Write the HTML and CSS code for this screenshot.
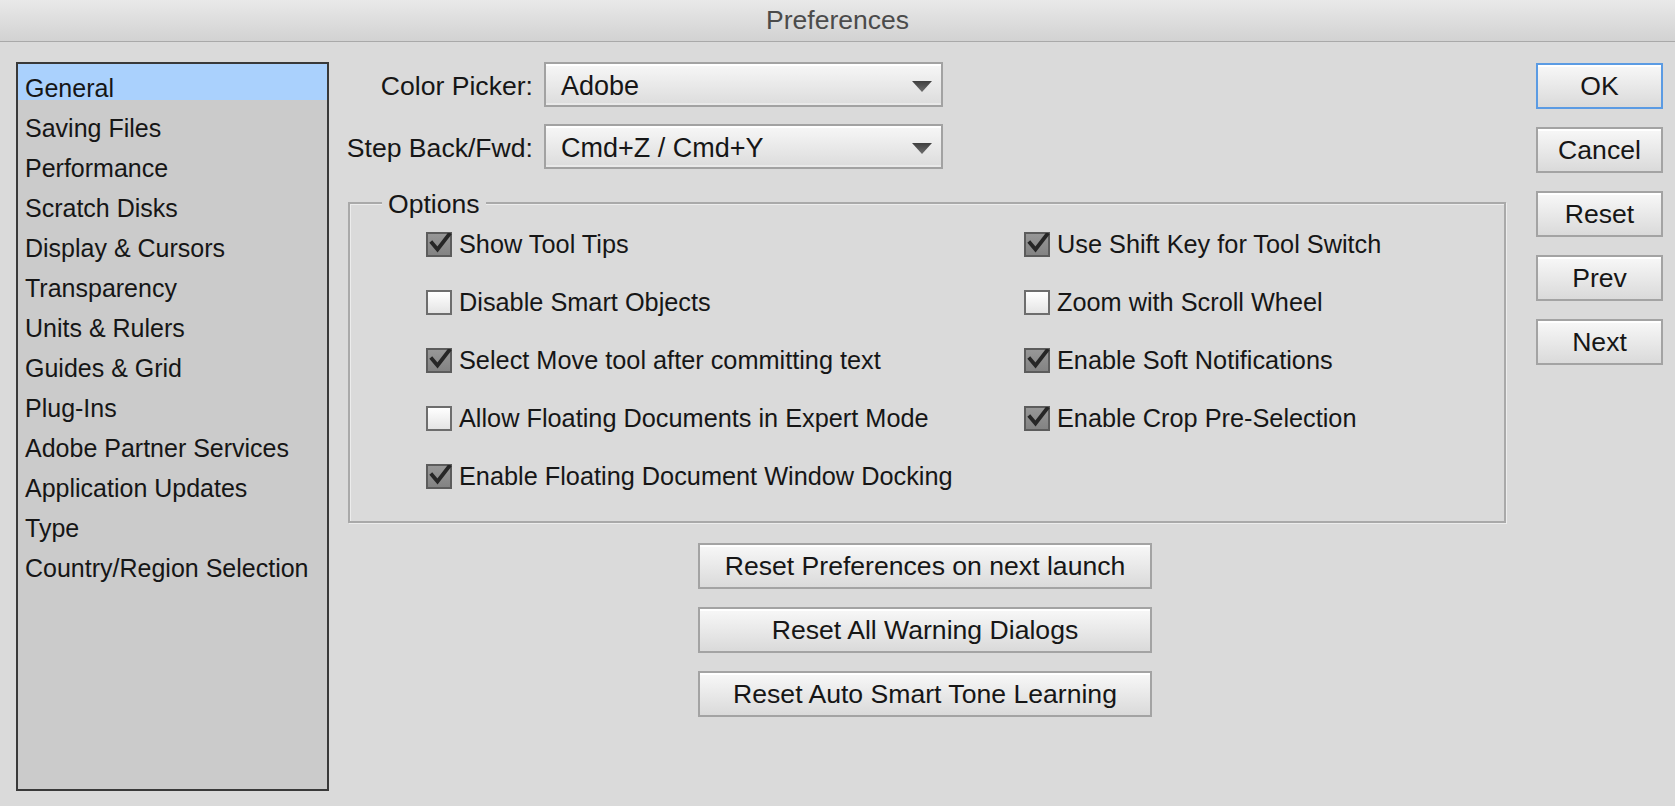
FILE: index.html
```html
<!DOCTYPE html>
<html lang="en">
<head>
<meta charset="utf-8">
<title>Preferences</title>
<link rel="stylesheet" href="styles.css">
</head>
<body>
<div class="window">
  <div class="titlebar">Preferences</div>
  <div class="content">
    <div class="sidebar">
      <ul class="nav">
        <li class="selected">General</li>
        <li>Saving Files</li>
        <li>Performance</li>
        <li>Scratch Disks</li>
        <li>Display &amp; Cursors</li>
        <li>Transparency</li>
        <li>Units &amp; Rulers</li>
        <li>Guides &amp; Grid</li>
        <li>Plug-Ins</li>
        <li>Adobe Partner Services</li>
        <li>Application Updates</li>
        <li>Type</li>
        <li>Country/Region Selection</li>
      </ul>
    </div>
    <div class="main">
      <div class="fields">
        <label class="field-label">Color Picker:</label>
        <div class="select"><span>Adobe</span><svg class="arrow" width="20" height="11" viewBox="0 0 20 11"><defs><linearGradient id="ag" x1="0" y1="0" x2="0" y2="1"><stop offset="0" stop-color="#3f3f3f"/><stop offset="1" stop-color="#6e6e6e"/></linearGradient></defs><polygon points="0,0 20,0 10,11" fill="url(#ag)"/></svg></div>
        <label class="field-label">Step Back/Fwd:</label>
        <div class="select"><span>Cmd+Z / Cmd+Y</span><svg class="arrow" width="20" height="11" viewBox="0 0 20 11"><polygon points="0,0 20,0 10,11" fill="url(#ag)"/></svg></div>
      </div>
      <div class="group">
        <div class="legend">Options</div>
        <div class="checks">
          <div class="check"><span class="box on"><svg viewBox="0 0 24 24" width="25" height="24"><polyline points="4.5,10 10,16.5 21.5,1.5" fill="none" stroke="#262626" stroke-width="3.8" stroke-linecap="square"/></svg></span><span class="text">Show Tool Tips</span></div>
          <div class="check"><span class="box on"><svg viewBox="0 0 24 24" width="25" height="24"><polyline points="4.5,10 10,16.5 21.5,1.5" fill="none" stroke="#262626" stroke-width="3.8" stroke-linecap="square"/></svg></span><span class="text">Use Shift Key for Tool Switch</span></div>
          <div class="check"><span class="box"></span><span class="text">Disable Smart Objects</span></div>
          <div class="check"><span class="box"></span><span class="text">Zoom with Scroll Wheel</span></div>
          <div class="check"><span class="box on"><svg viewBox="0 0 24 24" width="25" height="24"><polyline points="4.5,10 10,16.5 21.5,1.5" fill="none" stroke="#262626" stroke-width="3.8" stroke-linecap="square"/></svg></span><span class="text">Select Move tool after committing text</span></div>
          <div class="check"><span class="box on"><svg viewBox="0 0 24 24" width="25" height="24"><polyline points="4.5,10 10,16.5 21.5,1.5" fill="none" stroke="#262626" stroke-width="3.8" stroke-linecap="square"/></svg></span><span class="text">Enable Soft Notifications</span></div>
          <div class="check"><span class="box"></span><span class="text">Allow Floating Documents in Expert Mode</span></div>
          <div class="check"><span class="box on"><svg viewBox="0 0 24 24" width="25" height="24"><polyline points="4.5,10 10,16.5 21.5,1.5" fill="none" stroke="#262626" stroke-width="3.8" stroke-linecap="square"/></svg></span><span class="text">Enable Crop Pre-Selection</span></div>
          <div class="check"><span class="box on"><svg viewBox="0 0 24 24" width="25" height="24"><polyline points="4.5,10 10,16.5 21.5,1.5" fill="none" stroke="#262626" stroke-width="3.8" stroke-linecap="square"/></svg></span><span class="text">Enable Floating Document Window Docking</span></div>
        </div>
      </div>
      <div class="resets">
        <button class="btn wide">Reset Preferences on next launch</button>
        <button class="btn wide">Reset All Warning Dialogs</button>
        <button class="btn wide">Reset Auto Smart Tone Learning</button>
      </div>
    </div>
    <div class="actions">
      <button class="btn side default">OK</button>
      <button class="btn side">Cancel</button>
      <button class="btn side">Reset</button>
      <button class="btn side">Prev</button>
      <button class="btn side">Next</button>
    </div>
  </div>
</div>
</body>
</html>
```

FILE: styles.css
```css
* { box-sizing: border-box; }
html, body {
  margin: 0;
  padding: 0;
  width: 1675px;
  height: 806px;
  overflow: hidden;
  background: #dadada;
  font-family: "Liberation Sans", Arial, sans-serif;
  color: #161616;
}
.window {
  width: 1675px;
  height: 806px;
  display: flex;
  flex-direction: column;
}
.titlebar {
  height: 42px;
  line-height: 40px;
  text-align: center;
  font-size: 26.5px;
  color: #4b4b4b;
  background: linear-gradient(#e9e9e9, #d2d2d2);
  border-bottom: 1px solid #a9a9a9;
}
.content {
  display: flex;
  align-items: flex-start;
  padding: 20px 0 0 16px;
}
.sidebar {
  width: 313px;
  height: 729px;
  border: 2px solid #393939;
  background: #cbcbcb;
  overflow: hidden;
}
.nav {
  list-style: none;
  margin: -4px 0 0 0;
  padding: 0;
}
.nav li {
  height: 40px;
  padding: 13px 0 0 7px;
  font-size: 25px;
  line-height: 30px;
  white-space: nowrap;
}
.nav li.selected { background: #aad1fd; }
.main {
  margin-left: 19px;
  width: 1158px;
  display: flex;
  flex-direction: column;
}
.fields {
  display: grid;
  grid-template-columns: 185px 399px;
  column-gap: 11px;
  row-gap: 17px;
  align-items: center;
}
.field-label {
  justify-self: end;
  font-size: 26.6px;
  padding-top: 4px;
  white-space: nowrap;
}
.select {
  height: 45px;
  border: 2px solid #a2a2a2;
  background: linear-gradient(#f7f7f7, #dcdcdc);
  box-shadow: inset 0 2px 0 #ffffff, inset 0 -2px 0 #e9e9e9;
  display: flex;
  align-items: center;
  justify-content: space-between;
  padding: 3px 9px 0 15px;
  font-size: 27px;
}
.select .arrow { display: block; }
.group {
  margin-top: 33px;
  border: 2px solid #a9a9a9;
  box-shadow: inset 1px 1px 0 #ececec, 1px 1px 0 #ececec;
  padding: 0 0 32px 0;
}
.legend {
  margin: -15px 0 0 32px;
  width: fit-content;
  padding: 0 6px;
  background: #dadada;
  font-size: 26.6px;
  line-height: 30px;
}
.checks {
  margin: 13px 0 0 76px;
  display: grid;
  grid-template-columns: 598px 1fr;
  row-gap: 33px;
}
.check {
  display: flex;
  align-items: center;
  height: 25px;
}
.box {
  width: 26px;
  height: 25px;
  flex: none;
  border: 2px solid #6d6d6d;
  background: linear-gradient(#ffffff, #e4e4e4);
  margin-right: 7px;
  position: relative;
}
.box.on {
  background: linear-gradient(#979797, #838383);
  border-color: #5c5c5c;
}
.box svg {
  position: absolute;
  left: -1px;
  top: -1px;
}
.text {
  font-size: 25.3px;
  line-height: 25px;
  white-space: nowrap;
}
.resets {
  margin-top: 20px;
  display: flex;
  flex-direction: column;
  align-items: center;
  gap: 18px;
  padding-right: 4px;
}
.btn {
  font-family: "Liberation Sans", Arial, sans-serif;
  font-size: 26.6px;
  color: #161616;
  height: 46px;
  border: 2px solid #a3a3a3;
  background: linear-gradient(#f8f8f8, #dadada);
  box-shadow: inset 0 2px 0 #ffffff;
  padding: 0;
  margin: 0;
  border-radius: 0;
}
.btn.wide { width: 454px; }
.actions {
  margin-left: 30px;
  margin-top: 1px;
  display: flex;
  flex-direction: column;
  gap: 18px;
}
.btn.side { width: 127px; }
.btn.default { border-color: #5b9be3; }
```
